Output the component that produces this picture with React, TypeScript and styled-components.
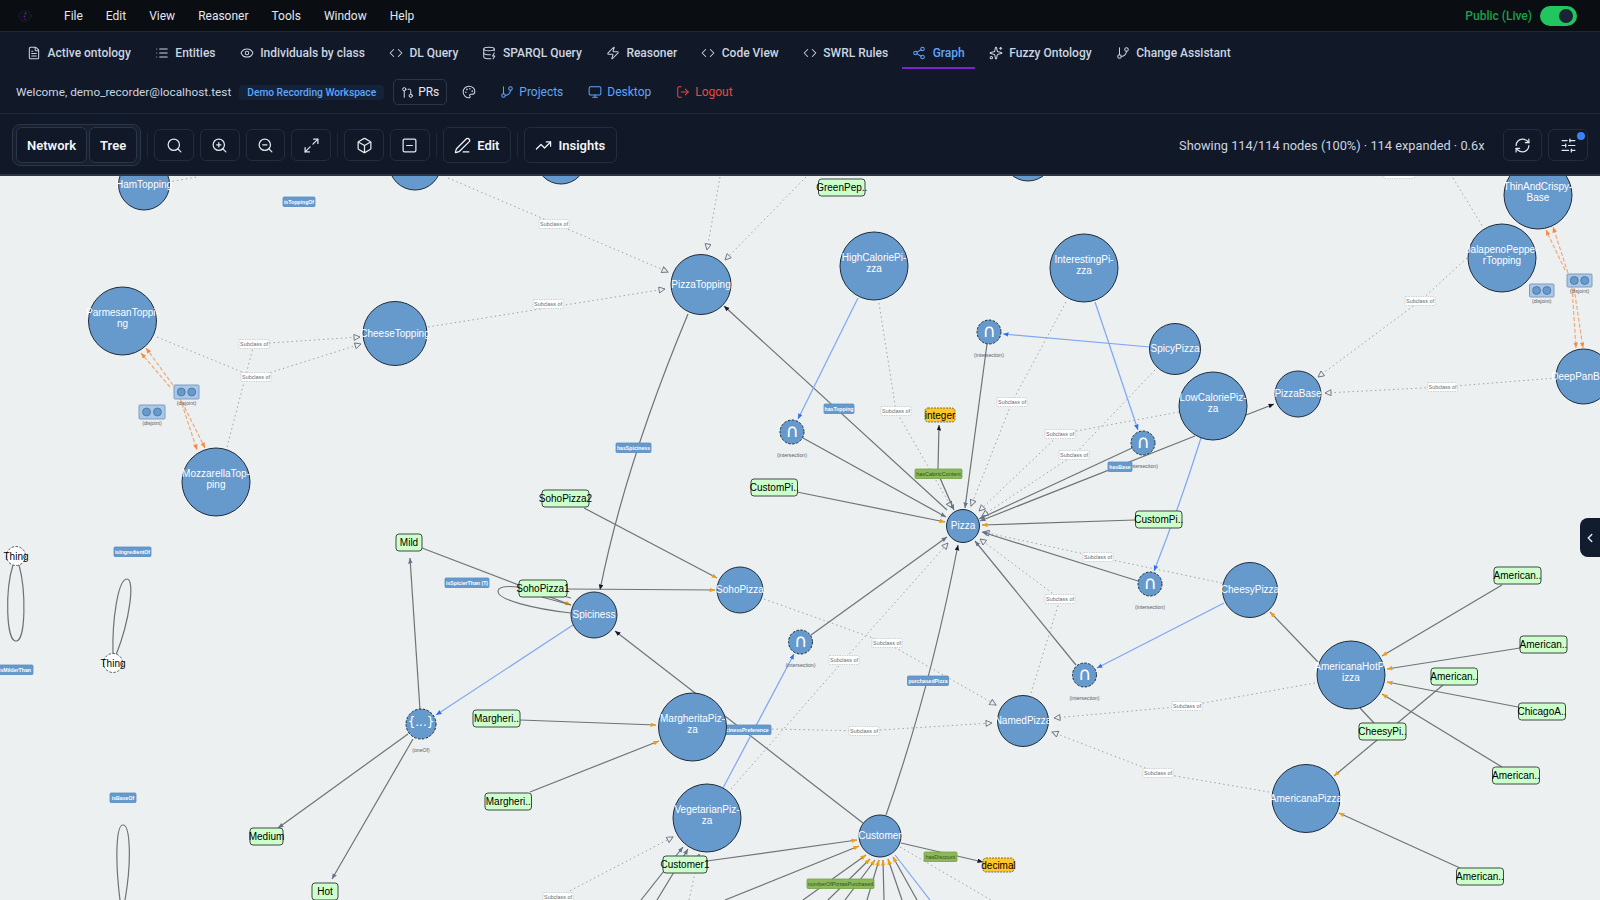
import React from 'react';
import styled, { createGlobalStyle } from 'styled-components';
import {
  Box, ChevronLeft, Code, DatabaseZap, Eye, FileText, GitBranch, GitPullRequest, List, LogOut,
  Maximize2, Monitor, Palette, PenLine, RefreshCw, Search, Share2, SlidersHorizontal, Sparkles, SquareMinus,
  TrendingUp, Zap, ZoomIn, ZoomOut,
} from 'lucide-react';

const GlobalStyle = createGlobalStyle`
  html, body, #root { margin: 0; height: 100%; }
  body { font-family: Roboto, "Liberation Sans", sans-serif; background: #111827; overflow: hidden; }
`;

const menuItems = ['File', 'Edit', 'View', 'Reasoner', 'Tools', 'Window', 'Help'];

const tabs = [
  { label: 'Active ontology', icon: FileText },
  { label: 'Entities', icon: List },
  { label: 'Individuals by class', icon: Eye },
  { label: 'DL Query', icon: Code },
  { label: 'SPARQL Query', icon: DatabaseZap },
  { label: 'Reasoner', icon: Zap },
  { label: 'Code View', icon: Code },
  { label: 'SWRL Rules', icon: Code },
  { label: 'Graph', icon: Share2, active: true },
  { label: 'Fuzzy Ontology', icon: Sparkles },
  { label: 'Change Assistant', icon: GitBranch },
];

// graph data, in page coordinates
type EdgeKind = 'o' | 'k' | 's' | 'b' | 'c' | 'd' | 'e' | 'f' | 'p';

const edges: [EdgeKind, string][] = [
  // subclass edges
  ['e', 'M168 182 L197 177'],
  ['d', 'M448 178 L668 272'],
  ['d', 'M428 327 L665 289'],
  ['d', 'M720 177 L707 250'],
  ['d', 'M806 177 L725 260'],
  ['d', 'M157 337 L242 372 L256 377 L361 344'],
  ['d', 'M227 447 L254 344 L360 337'],
  ['d', 'M879 303 L896 411 L952 508'],
  ['d', 'M1066 302 L1012 402 L971 506'],
  ['d', 'M1179 412 L1060 434 L979 511'],
  ['d', 'M1155 370 L1074 455 L982 516'],
  ['d', 'M1222 583 L1098 557 L983 532'],
  ['d', 'M1031 693 L1060 599 L980 539'],
  ['d', 'M731 789 L844 660 L948 543'],
  ['d', 'M764 599 L887 643 L996 705'],
  ['d', 'M772 729 L864 731 L992 723'],
  ['d', 'M1315 683 L1187 706 L1054 718'],
  ['d', 'M1269 792 L1158 773 L1052 732'],
  ['d', 'M1467 258 L1420 301 L1318 377'],
  ['d', 'M1556 378 L1442 387 L1325 393'],
  ['d', 'M558 897 L673 837'],
  ['d', 'M689 900 L699 854'],
  ['e', 'M1453 178 L1483 227'],
  ['e', 'M900 847 L991 900'],
  // object properties
  ['s', 'M1076 665 L975 541'],
  ['k', 'M863 823 L615 631'],
  ['k', 'M947 510 L724 306'],
  ['k', 'M688 314 Q 625 465 600 590'],
  ['s', 'M803 438 L946 517'],
  ['s', 'M987 344 L965 508'],
  ['k', 'M938 469 L939 425'],
  ['s', 'M940 478 L954 510'],
  ['s', 'M1132 448 L979 519'],
  ['s', 'M1195 436 L980 521'],
  ['s', 'M1138 581 L982 532'],
  ['s', 'M811 635 L947 537'],
  ['k', 'M886 815 Q 930 690 958 545'],
  ['k', 'M1246 415 L1274 404'],
  ['s', 'M420 710 L410 558'],
  ['s', 'M408 734 L278 828'],
  ['s', 'M413 739 L332 879'],
  ['s', 'M641 900 L683 847'],
  ['s', 'M657 900 L688 849'],
  ['k', 'M901 843 L983 862'],
  ['o', 'M422 548 L571 605'],
  ['p', 'M542 597 L571 605'],
  ['o', 'M567 589 L715 590'],
  ['o', 'M584 508 L717 578'],
  ['o', 'M797 492 L945 522'],
  ['o', 'M1135 520 L982 525'],
  ['o', 'M520 720 L656 725'],
  ['o', 'M530 792 L659 741'],
  ['o', 'M707 861 L857 840'],
  ['o', 'M725 900 L859 846'],
  ['o', 'M803 900 L866 855'],
  ['o', 'M828 900 L870 859'],
  ['o', 'M845 900 L875 860'],
  ['o', 'M867 900 L879 860'],
  ['o', 'M884 900 L883 860'],
  ['o', 'M902 900 L888 859'],
  ['o', 'M917 900 L893 857'],
  ['o', 'M1318 662 L1270 612'],
  ['o', 'M1502 585 L1382 656'],
  ['o', 'M1520 648 L1387 669'],
  ['o', 'M1518 707 L1387 682'],
  ['o', 'M1502 767 L1382 694'],
  ['o', 'M1443 685 L1334 776'],
  ['p', 'M1374 723 L1360 708'],
  ['o', 'M1460 868 L1339 813'],
  // self loops
  ['p', 'M571 613 C 535 609 497 600 498 591 C 499 583 525 586 571 598'],
  ['p', 'M13 565 C 5 590 6 641 16 641 C 26 641 26 590 19 565'],
  ['p', 'M113 655 C 112 620 118 579 127 579 C 135 579 130 620 116 655'],
  ['p', 'M120 900 C 115 860 116 825 123 825 C 130 825 132 860 125 900'],
  // blue links to anonymous classes
  ['b', 'M858 298 L798 419'],
  ['b', 'M1095 302 L1138 430'],
  ['b', 'M1150 347 L1003 334'],
  ['b', 'M1201 438 Q 1180 505 1154 571'],
  ['b', 'M1224 603 L1097 668'],
  ['b', 'M723 788 L794 654'],
  ['b', 'M573 625 L436 715'],
  ['c', 'M895 855 L930 900'],
  // disjoint
  ['f', 'M173 385 L146 348'],
  ['f', 'M170 387 L141 353'],
  ['f', 'M180 398 L197 450'],
  ['f', 'M182 402 L205 448'],
  ['f', 'M1568 273 L1553 227'],
  ['f', 'M1565 270 L1546 230'],
  ['f', 'M1572 287 L1576 348'],
  ['f', 'M1574 288 L1583 348'],
];

const classNodes = [
  { x: 144, y: 184.5, r: 25.5, lines: ['HamTopping'] },
  { x: 415, y: 164, r: 26, lines: [] },
  { x: 561, y: 159, r: 25, lines: [] },
  { x: 1028, y: 156, r: 25, lines: [] },
  { x: 122.5, y: 321, r: 34, lines: ['ParmesanToppi-', 'ng'] },
  { x: 395, y: 333.5, r: 32, lines: ['CheeseTopping'] },
  { x: 216, y: 482, r: 34, lines: ['MozzarellaTop-', 'ping'] },
  { x: 701, y: 284.5, r: 30, lines: ['PizzaTopping'] },
  { x: 874, y: 266, r: 34, lines: ['HighCaloriePi-', 'zza'] },
  { x: 1084, y: 268, r: 34, lines: ['InterestingPi-', 'zza'] },
  { x: 1175, y: 349, r: 25.5, lines: ['SpicyPizza'] },
  { x: 1213, y: 406, r: 34, lines: ['LowCaloriePiz-', 'za'] },
  { x: 1298, y: 394, r: 23, lines: ['PizzaBase'] },
  { x: 1583.5, y: 376.5, r: 27.5, lines: ['DeepPanBase'] },
  { x: 1538, y: 195, r: 34, lines: ['ThinAndCrispy-', 'Base'] },
  { x: 1502, y: 258, r: 34, lines: ['JalapenoPeppe-', 'rTopping'] },
  { x: 963, y: 526, r: 16.5, lines: ['Pizza'] },
  { x: 740, y: 590, r: 23, lines: ['SohoPizza'] },
  { x: 594, y: 615, r: 23, lines: ['Spiciness'] },
  { x: 692.5, y: 727, r: 34, lines: ['MargheritaPiz-', 'za'] },
  { x: 707, y: 818, r: 34, lines: ['VegetarianPiz-', 'za'] },
  { x: 880, y: 836, r: 21, lines: ['Customer'] },
  { x: 1023, y: 721, r: 25.5, lines: ['NamedPizza'] },
  { x: 1250, y: 590, r: 27.5, lines: ['CheesyPizza'] },
  { x: 1351, y: 675, r: 34, lines: ['AmericanaHotP-', 'izza'] },
  { x: 1306, y: 798.5, r: 34, lines: ['AmericanaPizza'] },
];

const anonNodes = [
  { x: 792, y: 432, glyph: '∩', caption: '(intersection)' },
  { x: 989, y: 332, glyph: '∩', caption: '(intersection)' },
  { x: 1143, y: 443, glyph: '∩', caption: '(intersection)' },
  { x: 800.5, y: 642, glyph: '∩', caption: '(intersection)' },
  { x: 1084.5, y: 675, glyph: '∩', caption: '(intersection)' },
  { x: 1150, y: 584, glyph: '∩', caption: '(intersection)' },
  { x: 421, y: 724, glyph: '{...}', caption: '(oneOf)', r: 15 },
];

const individuals = [
  { x: 818.5, y: 179, w: 46.5, label: 'GreenPep..' },
  { x: 396, y: 534, w: 26, label: 'Mild' },
  { x: 250, y: 828, w: 33, label: 'Medium' },
  { x: 312, y: 883, w: 26, label: 'Hot' },
  { x: 519, y: 580, w: 48, label: 'SohoPizza1' },
  { x: 542, y: 490, w: 47, label: 'SohoPizza2' },
  { x: 751, y: 479, w: 46.5, label: 'CustomPi..' },
  { x: 1135.5, y: 511, w: 46.5, label: 'CustomPi..' },
  { x: 473, y: 710, w: 47, label: 'Margheri..' },
  { x: 485, y: 793, w: 46.5, label: 'Margheri..' },
  { x: 663, y: 856, w: 44, label: 'Customer1' },
  { x: 1494, y: 567, w: 47, label: 'American..' },
  { x: 1520, y: 636, w: 47, label: 'American..' },
  { x: 1431, y: 668, w: 46.5, label: 'American..' },
  { x: 1518.5, y: 703, w: 47, label: 'ChicagoA..' },
  { x: 1492.5, y: 767, w: 47, label: 'American..' },
  { x: 1456.5, y: 868, w: 47, label: 'American..' },
  { x: 1359, y: 723, w: 47, label: 'CheesyPi..' },
];

const datatypes = [
  { x: 925, y: 408, w: 30, h: 14, label: 'integer' },
  { x: 983, y: 858, w: 31, h: 14, label: 'decimal' },
];

const things = [{ x: 16, y: 556 }, { x: 113, y: 663 }];

const disjoints = [
  { x: 174, y: 385, w: 25, h: 14 },
  { x: 139, y: 405, w: 26, h: 14 },
  { x: 1529.5, y: 284, w: 24.5, h: 13 },
  { x: 1567, y: 274, w: 25, h: 13 },
];

type LabelKind = 'sub' | 'prop' | 'data';

const subclassLabels = [
  [554, 224], [548, 304], [896, 411], [1012, 402], [1060, 434], [254, 344], [256, 377], [887, 643], [844, 660],
  [864, 731], [1060, 599], [1098, 557], [1187, 706], [1158, 773], [1420, 301], [1442.5, 387], [1074, 455],
  [558, 897], [1399, 174],
];

const edgeLabels: { x: number; y: number; w: number; text: string; kind: LabelKind }[] = [
  { x: 283, y: 197, w: 32, text: 'isToppingOf', kind: 'prop' },
  { x: 114, y: 547, w: 37, text: 'isIngredientOf', kind: 'prop' },
  { x: -3, y: 665, w: 36, text: 'isMilderThan', kind: 'prop' },
  { x: 110, y: 793, w: 26, text: 'isBaseOf', kind: 'prop' },
  { x: 445, y: 578, w: 44, text: 'isSpicierThan (T)', kind: 'prop' },
  { x: 616, y: 443, w: 35, text: 'hasSpiciness', kind: 'prop' },
  { x: 824, y: 404, w: 30, text: 'hasTopping', kind: 'prop' },
  { x: 1108, y: 462, w: 24, text: 'hasBase', kind: 'prop' },
  { x: 907.5, y: 676, w: 41, text: 'purchasedPizza', kind: 'prop' },
  { x: 716, y: 725, w: 55, text: 'spicinessPreference', kind: 'prop' },
  { x: 915, y: 469, w: 47, text: 'hasCaloricContent', kind: 'data' },
  { x: 924, y: 852, w: 33, text: 'hasDiscount', kind: 'data' },
  { x: 807, y: 879, w: 67, text: 'numberOfPizzasPurchased', kind: 'data' },
];

const markerColors: Record<string, string> = { o: '#f39c12', k: '#111827', s: '#64748b', b: '#2f6ff0', f: '#f58a3c' };

const edgeStroke = (kind: EdgeKind) => {
  if (kind === 'b' || kind === 'c') return '#7ea6f4';
  if (kind === 'd' || kind === 'e') return '#a0a4a7';
  if (kind === 'f') return '#f2a878';
  return '#6e7376';
};

const hasHead = (kind: EdgeKind) => kind !== 'p' && kind !== 'e' && kind !== 'c';

const App = () => (
  <Page>
    <GlobalStyle />
    <MenuBar>
      <Logo viewBox="0 0 16 12">
        <path d="M1 6 L5 1 H11 L15 6 L11 11 H5 Z" fill="#0e1218" stroke="#1a1f29" strokeWidth="0.8" />
        <circle cx="8.6" cy="3.4" r="0.8" fill="#7e22ce" />
        <circle cx="7.4" cy="6.2" r="0.8" fill="#7e22ce" />
        <circle cx="8" cy="9" r="0.7" fill="#581c87" />
      </Logo>
      <MenuList>
        {menuItems.map(item => <MenuItem key={item}>{item}</MenuItem>)}
      </MenuList>
      <LiveStatus>
        <LiveText>Public (Live)</LiveText>
        <Toggle><ToggleKnob /></Toggle>
      </LiveStatus>
    </MenuBar>

    <TabRow>
      {tabs.map(tab => (
        <Tab key={tab.label} $active={tab.active}>
          <tab.icon size={14} strokeWidth={1.75} />
          {tab.label}
        </Tab>
      ))}
    </TabRow>

    <UserRow>
      <Welcome>Welcome, demo_recorder@localhost.test</Welcome>
      <WorkspaceBadge>Demo Recording Workspace</WorkspaceBadge>
      <PrButton><GitPullRequest size={13} strokeWidth={1.75} />PRs</PrButton>
      <PaletteSlot><Palette size={14} strokeWidth={1.75} /></PaletteSlot>
      <UserLink><GitBranch size={14} strokeWidth={1.75} />Projects</UserLink>
      <UserLink><Monitor size={14} strokeWidth={1.75} />Desktop</UserLink>
      <UserLink $danger><LogOut size={14} strokeWidth={1.75} />Logout</UserLink>
    </UserRow>

    <Toolbar>
      <ViewSwitch>
        <SwitchButton>Network</SwitchButton>
        <SwitchButton>Tree</SwitchButton>
      </ViewSwitch>
      <Divider />
      <IconButton><Search size={17} strokeWidth={1.75} /></IconButton>
      <IconButton><ZoomIn size={17} strokeWidth={1.75} /></IconButton>
      <IconButton><ZoomOut size={17} strokeWidth={1.75} /></IconButton>
      <IconButton><Maximize2 size={17} strokeWidth={1.75} /></IconButton>
      <Divider />
      <IconButton><Box size={17} strokeWidth={1.75} /></IconButton>
      <IconButton><SquareMinus size={17} strokeWidth={1.75} /></IconButton>
      <Divider />
      <TextButton><PenLine size={17} strokeWidth={1.75} />Edit</TextButton>
      <Divider />
      <TextButton><TrendingUp size={17} strokeWidth={1.75} />Insights</TextButton>
      <Stats>Showing 114/114 nodes (100%) · 114 expanded · 0.6x</Stats>
      <IconButton><RefreshCw size={17} strokeWidth={1.75} /></IconButton>
      <IconButton>
        <SlidersHorizontal size={17} strokeWidth={1.75} />
        <NoticeDot />
      </IconButton>
    </Toolbar>

    <Canvas>
      <GraphSvg viewBox="0 176 1600 724">
        <defs>
          {Object.keys(markerColors).map(k => (
            <marker key={k} id={`head-${k}`} markerUnits="userSpaceOnUse" markerWidth="7" markerHeight="6" refX="5.5" refY="2.3" orient="auto">
              <path d="M0 0 L5.5 2.3 L0 4.6 Z" fill={markerColors[k]} />
            </marker>
          ))}
          <marker id="head-d" markerUnits="userSpaceOnUse" markerWidth="10" markerHeight="10" refX="7" refY="3.4" orient="auto">
            <path d="M1 0.4 L7 3.4 L1 6.4 Z" fill="#ecf0f1" stroke="#6b7280" strokeWidth="0.9" />
          </marker>
        </defs>

        {edges.map(([kind, d], i) => (
          <EdgePath
            key={i}
            d={d}
            stroke={edgeStroke(kind)}
            $kind={kind}
            markerEnd={hasHead(kind) ? `url(#head-${kind})` : undefined}
          />
        ))}

        {anonNodes.map((n, i) => (
          <CaptionText key={i} x={n.x} y={n.y + (n.r || 12) + 11}>{n.caption}</CaptionText>
        ))}

        {disjoints.map((d, i) => (
          <CaptionText key={i} x={d.x + d.w / 2} y={d.y + d.h + 4}>(disjoint)</CaptionText>
        ))}

        {subclassLabels.map(([x, y], i) => (
          <g key={i}>
            <SubclassBox x={x - 15} y={y - 4.5} width={30} height={9} rx={1} />
            <SubclassText x={x} y={y}>Subclass of</SubclassText>
          </g>
        ))}

        {edgeLabels.map(l => (
          <g key={l.text}>
            <EdgeLabelBox x={l.x} y={l.y} width={l.w} height={9.5} rx={1} $kind={l.kind} />
            <EdgeLabelText x={l.x + l.w / 2} y={l.y + 4.75} $kind={l.kind}>{l.text}</EdgeLabelText>
          </g>
        ))}

        {disjoints.map((d, i) => (
          <g key={i}>
            <DisjointBox x={d.x} y={d.y} width={d.w} height={d.h} rx={1} />
            <DisjointDot cx={d.x + d.w * 0.29} cy={d.y + d.h / 2} r={4} />
            <DisjointDot cx={d.x + d.w * 0.71} cy={d.y + d.h / 2} r={4} />
          </g>
        ))}

        {classNodes.map((n, i) => (
          <g key={i}>
            <ClassCircle cx={n.x} cy={n.y} r={n.r} />
            {n.lines.map((line, j) => (
              <ClassText key={line} x={n.x} y={n.lines.length > 1 ? n.y - 8.5 + j * 11 : n.y - 0.5}>{line}</ClassText>
            ))}
          </g>
        ))}

        {anonNodes.map((n, i) => (
          <g key={i}>
            <AnonCircle cx={n.x} cy={n.y} r={n.r || 12} />
            <AnonText x={n.x} y={n.y - 2} $wide={n.glyph !== '∩'}>{n.glyph}</AnonText>
          </g>
        ))}

        {individuals.map((n, i) => (
          <g key={i}>
            <IndividualBox x={n.x} y={n.y} width={n.w} height={17} rx={3} />
            <DarkText x={n.x + n.w / 2} y={n.y + 8}>{n.label}</DarkText>
          </g>
        ))}

        {datatypes.map(n => (
          <g key={n.label}>
            <DatatypeBox x={n.x} y={n.y} width={n.w} height={n.h} rx={3} />
            <DarkText x={n.x + n.w / 2} y={n.y + n.h / 2}>{n.label}</DarkText>
          </g>
        ))}

        {things.map((n, i) => (
          <g key={i}>
            <ThingCircle cx={n.x} cy={n.y} r={9.5} />
            <DarkText x={n.x} y={n.y}>Thing</DarkText>
          </g>
        ))}
      </GraphSvg>
      <CollapseHandle><ChevronLeft size={14} strokeWidth={2.5} /></CollapseHandle>
    </Canvas>
  </Page>
);

export default App;

const Page = styled.div`
  display: flex;
  flex-direction: column;
  height: 100vh;
  color: #cbd5e1;
`;

const MenuBar = styled.div`
  display: flex;
  align-items: center;
  flex: 0 0 32px;
  box-sizing: border-box;
  padding: 1px 23px 0 17px;
  background: #0a0d12;
  border-bottom: 1px solid #1f2733;
`;

const Logo = styled.svg`
  width: 16px;
  height: 12px;
`;

const MenuList = styled.div`
  display: flex;
  gap: 23px;
  margin-left: 31px;
`;

const MenuItem = styled.span`
  font-size: 12px;
  color: #e2e8f0;
`;

const LiveStatus = styled.div`
  display: flex;
  align-items: center;
  gap: 8px;
  margin-left: auto;
`;

const LiveText = styled.span`
  font-size: 12px;
  font-weight: 500;
  color: #16a34a;
`;

const Toggle = styled.div`
  display: flex;
  align-items: center;
  justify-content: flex-end;
  width: 37px;
  height: 20px;
  box-sizing: border-box;
  padding: 0 4px;
  border-radius: 10px;
  background: #22c55e;
`;

const ToggleKnob = styled.div`
  width: 14px;
  height: 14px;
  border-radius: 50%;
  background: #1a2436;
`;

const TabRow = styled.div`
  display: flex;
  gap: 4.1px;
  flex: 0 0 41px;
  box-sizing: border-box;
  padding: 6px 0 4px 17px;
  background: #111827;
`;

const Tab = styled.div<{ $active?: boolean }>`
  display: flex;
  align-items: center;
  gap: 6.5px;
  padding: 0 10px;
  font-size: 12px;
  font-weight: 500;
  color: ${props => (props.$active ? '#60a5fa' : '#cbd5e1')};
  border-bottom: 2px solid ${props => (props.$active ? '#7e22ce' : 'transparent')};
`;

const UserRow = styled.div`
  display: flex;
  align-items: center;
  flex: 0 0 41px;
  box-sizing: border-box;
  padding: 0 0 2px 16px;
  background: #111827;
  border-bottom: 1px solid #1e293b;
`;

const Welcome = styled.span`
  font-size: 11.8px;
  color: #cbd5e1;
`;

const WorkspaceBadge = styled.span`
  margin-left: 8px;
  padding: 2px 8px;
  border-radius: 4px;
  background: #15233a;
  color: #60a5fa;
  font-size: 10.2px;
  font-weight: 500;
`;

const PrButton = styled.div`
  display: flex;
  align-items: center;
  gap: 4px;
  height: 26px;
  box-sizing: border-box;
  margin-left: 9px;
  padding: 0 7px;
  border: 1px solid #2b3648;
  border-radius: 5px;
  font-size: 12px;
  color: #e2e8f0;
`;

const PaletteSlot = styled.div`
  display: flex;
  margin: 0 24px 0 15px;
  color: #cbd5e1;
`;

const UserLink = styled.div<{ $danger?: boolean }>`
  display: flex;
  align-items: center;
  gap: 5px;
  margin-right: 25px;
  font-size: 12px;
  color: ${props => (props.$danger ? '#ef4444' : '#60a5fa')};
`;

const Toolbar = styled.div`
  display: flex;
  align-items: center;
  gap: 6px;
  flex: 0 0 62px;
  box-sizing: border-box;
  padding: 2px 12px 0;
  background: #111827;
  border-bottom: 2px solid #2a3544;
`;

const ViewSwitch = styled.div`
  display: flex;
  gap: 2px;
  padding: 2px 3px;
  border: 1px solid #2b3648;
  border-radius: 8px;
  background: #172030;
`;

const SwitchButton = styled.div`
  display: flex;
  align-items: center;
  height: 34px;
  padding: 0 10px;
  border: 1px solid #2b3648;
  border-radius: 6px;
  background: #111827;
  font-size: 13px;
  font-weight: 600;
  color: #f1f5f9;
`;

const Divider = styled.div`
  width: 1px;
  height: 24px;
  background: #1e293b;
`;

const IconButton = styled.div`
  position: relative;
  display: flex;
  align-items: center;
  justify-content: center;
  width: 39.75px;
  height: 32px;
  box-sizing: border-box;
  border: 1px solid #222d3d;
  border-radius: 6px;
  color: #e2e8f0;
`;

const NoticeDot = styled.span`
  position: absolute;
  top: 2px;
  right: 2px;
  width: 8px;
  height: 8px;
  border-radius: 50%;
  background: #3b82f6;
`;

const TextButton = styled.div`
  display: flex;
  align-items: center;
  gap: 6px;
  height: 36px;
  box-sizing: border-box;
  padding: 0 10.5px;
  border: 1px solid #222d3d;
  border-radius: 6px;
  font-size: 13px;
  font-weight: 600;
  color: #f1f5f9;
`;

const Stats = styled.span`
  margin-left: auto;
  margin-right: 12px;
  font-size: 12.8px;
  color: #cbd5e1;
`;

const Canvas = styled.div`
  position: relative;
  flex: 1;
  min-height: 0;
  background: #ecf0f1;
  overflow: hidden;
`;

const GraphSvg = styled.svg`
  display: block;
  width: 100%;
  height: 100%;
  font-family: "Liberation Sans", Arial, sans-serif;
`;

const EdgePath = styled.path<{ $kind: EdgeKind }>`
  fill: none;
  stroke-width: ${props => (props.$kind === 'd' || props.$kind === 'e' ? 1 : 1.2)};
  stroke-dasharray: ${props => (props.$kind === 'd' || props.$kind === 'e' ? '1.5 3' : props.$kind === 'f' ? '4 2' : 'none')};
`;

const CaptionText = styled.text`
  font-size: 5.2px;
  fill: #55606a;
  text-anchor: middle;
  dominant-baseline: central;
`;

const SubclassBox = styled.rect`
  fill: #ffffff;
  stroke: #b9bdc0;
  stroke-width: 0.7;
  stroke-dasharray: 1.4 1;
`;

const SubclassText = styled.text`
  font-size: 5.4px;
  fill: #666e75;
  text-anchor: middle;
  dominant-baseline: central;
`;

const EdgeLabelBox = styled.rect<{ $kind: LabelKind }>`
  fill: ${props => (props.$kind === 'data' ? '#8ab85a' : '#6699cc')};
  stroke: ${props => (props.$kind === 'data' ? '#74a344' : '#5a8dc0')};
  stroke-width: 0.8;
`;

const EdgeLabelText = styled.text<{ $kind: LabelKind }>`
  font-size: ${props => (props.$kind === 'data' ? 5.4 : 5.2)}px;
  font-weight: ${props => (props.$kind === 'data' ? 400 : 700)};
  fill: ${props => (props.$kind === 'data' ? '#33501a' : '#ffffff')};
  text-anchor: middle;
  dominant-baseline: central;
`;

const DisjointBox = styled.rect`
  fill: #a9c7ea;
  stroke: #7f9cbd;
  stroke-width: 1;
`;

const DisjointDot = styled.circle`
  fill: #6699cc;
  stroke: #4b6a8a;
  stroke-width: 0.7;
`;

const ClassCircle = styled.circle`
  fill: #6699cc;
  stroke: #1f2d3a;
  stroke-width: 1;
`;

const ClassText = styled.text`
  font-size: 10px;
  fill: #ffffff;
  text-anchor: middle;
  dominant-baseline: central;
`;

const AnonCircle = styled.circle`
  fill: #6699cc;
  stroke: #1f2d3a;
  stroke-width: 1;
  stroke-dasharray: 2.5 1.5;
`;

const AnonText = styled.text<{ $wide: boolean }>`
  font-family: "DejaVu Sans", sans-serif;
  font-size: ${props => (props.$wide ? 12 : 18)}px;
  fill: #ffffff;
  text-anchor: middle;
  dominant-baseline: central;
`;

const IndividualBox = styled.rect`
  fill: #ccffcc;
  stroke: #3f4a44;
  stroke-width: 1;
`;

const DatatypeBox = styled.rect`
  fill: #ffc72c;
  stroke: #5b5535;
  stroke-width: 0.8;
  stroke-dasharray: 2 1;
`;

const DarkText = styled.text`
  font-size: 10px;
  fill: #000000;
  text-anchor: middle;
  dominant-baseline: central;
`;

const ThingCircle = styled.circle`
  fill: #ffffff;
  stroke: #333333;
  stroke-width: 0.8;
  stroke-dasharray: 2.5 1.5;
`;

const CollapseHandle = styled.div`
  position: absolute;
  top: 342px;
  right: 0;
  display: flex;
  align-items: center;
  justify-content: center;
  width: 20px;
  height: 39px;
  border-radius: 8px 0 0 8px;
  background: #111c2e;
  color: #e2e8f0;
`;
